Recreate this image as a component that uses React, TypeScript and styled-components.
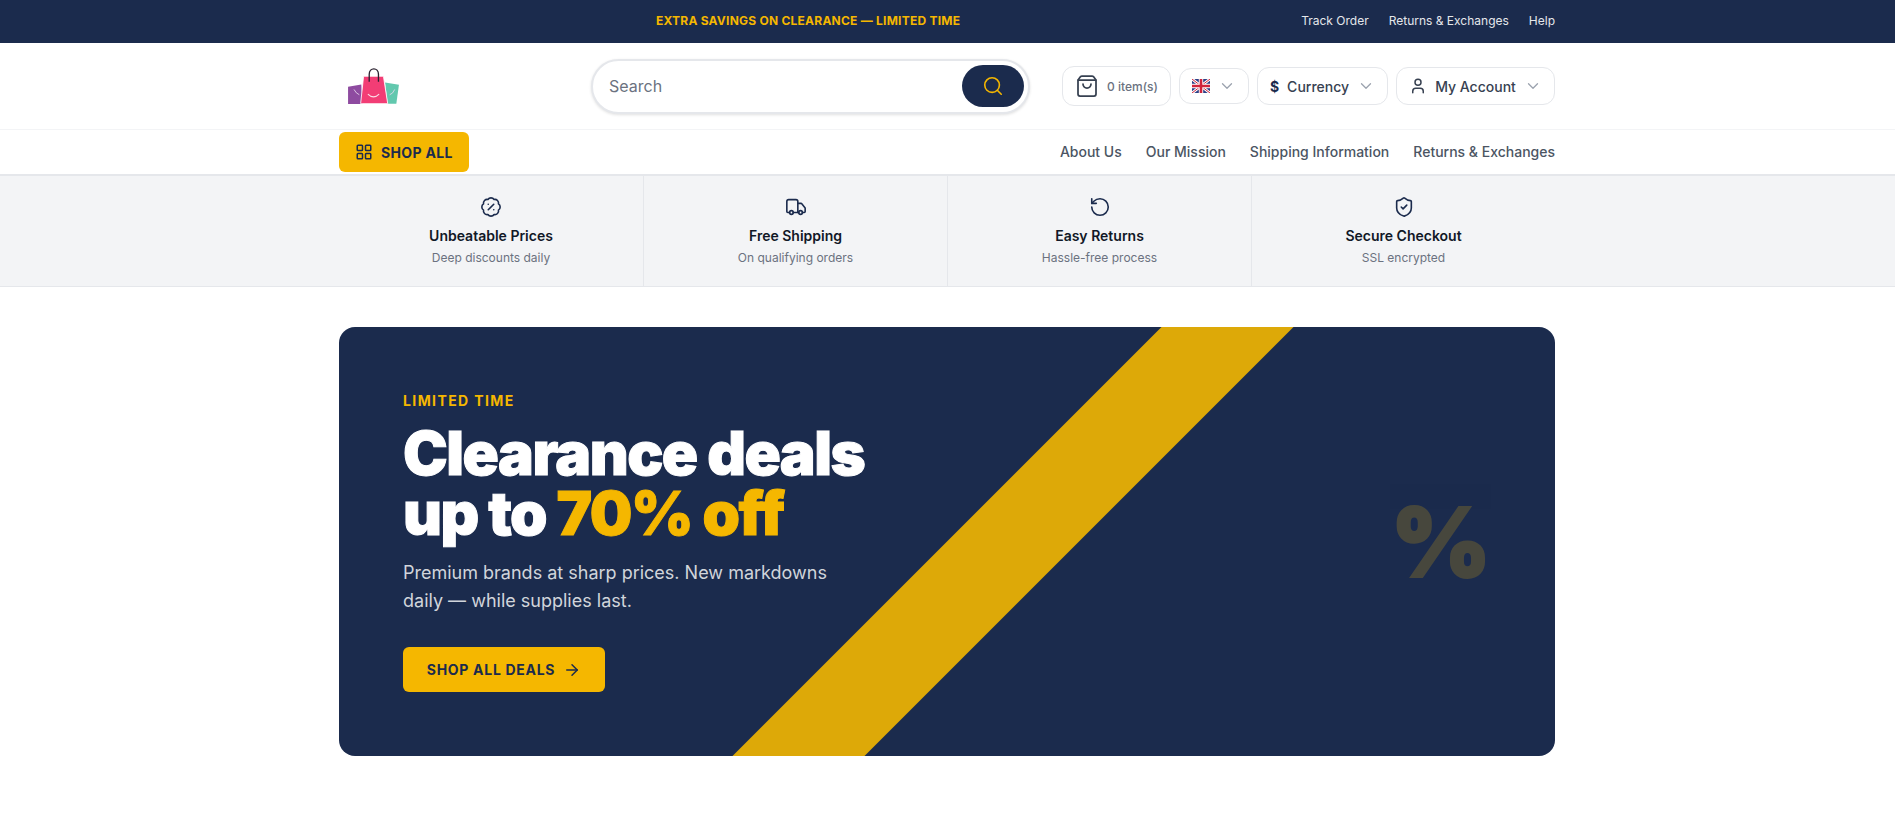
import styled, { createGlobalStyle } from "styled-components";
import {
  ArrowRight,
  BadgePercent,
  ChevronDown,
  LayoutGrid,
  RotateCcw,
  Search,
  ShieldCheck,
  ShoppingBag,
  Truck,
  User,
} from "lucide-react";

const navy = "#1b2b4d";
const yellow = "#f5b700";
const line = "#e5e7eb";

const GlobalStyle = createGlobalStyle`
  * {
    box-sizing: border-box;
  }
  html, body {
    margin: 0;
    background: #fff;
    font-family: Inter, "Liberation Sans", sans-serif;
    color: #111827;
  }
`;

const Container = styled.div`
  width: 1216px;
  margin-left: 339px;
`;

const TopBar = styled.div`
  height: 43px;
  background: ${navy};
`;

const TopBarInner = styled(Container)`
  height: 100%;
  display: flex;
  align-items: center;
  gap: 24px;
  padding-bottom: 1px;
`;

const Promo = styled.p`
  flex: 1;
  margin: 0;
  text-align: center;
  color: ${yellow};
  font-size: 12px;
  font-weight: 700;
  line-height: 16px;
  letter-spacing: 0.02em;
`;

const TopLinks = styled.nav`
  display: flex;
  gap: 20px;
`;

const TopLink = styled.a`
  color: #e5e7eb;
  font-size: 12px;
  line-height: 16px;
`;

const Header = styled.header`
  height: 87px;
  border-bottom: 1px solid #f3f4f6;
`;

const HeaderInner = styled(Container)`
  height: 100%;
  display: grid;
  grid-template-columns: 220px 1fr auto;
  column-gap: 32px;
  align-items: center;
`;

const Logo = styled.a`
  display: flex;
  padding-left: 9px;
  svg {
    display: block;
  }
`;

const SearchBox = styled.div`
  height: 55px;
  display: flex;
  align-items: center;
  justify-content: space-between;
  padding: 0 4px 0 16px;
  border: 2px solid ${line};
  border-radius: 9999px;
  background: #fff;
  box-shadow: 0 1px 3px rgba(0, 0, 0, 0.12);
`;

const SearchPlaceholder = styled.span`
  color: #6b7280;
  font-size: 16px;
`;

const SearchButton = styled.button`
  width: 62px;
  height: 42px;
  display: flex;
  align-items: center;
  justify-content: center;
  padding: 0;
  border: 0;
  border-radius: 9999px;
  background: ${navy};
  color: ${yellow};
`;

const Controls = styled.div`
  display: flex;
  align-items: center;
  gap: 8px;
`;

const Control = styled.div<{ $h: number; $w: number }>`
  width: ${(p) => p.$w}px;
  height: ${(p) => p.$h}px;
  display: flex;
  align-items: center;
  justify-content: center;
  gap: 8px;
  border: 1px solid ${line};
  border-radius: 12px;
  background: #fff;
  color: #374151;
  font-size: 14px;
  font-weight: 500;
`;

const CartCount = styled.span`
  color: #6b7280;
  font-size: 12px;
`;

const Dollar = styled.span`
  color: ${navy};
  font-weight: 700;
`;

const Caret = styled(ChevronDown)`
  color: #9ca3af;
`;

const Nav = styled.div`
  height: 46px;
  border-bottom: 2px solid ${line};
`;

const NavInner = styled(Container)`
  height: 100%;
  display: flex;
  align-items: center;
  justify-content: space-between;
`;

const ShopAll = styled.button`
  width: 130px;
  height: 40px;
  display: flex;
  align-items: center;
  gap: 8px;
  padding: 0 0 0 16px;
  border: 0;
  border-radius: 6px;
  background: ${yellow};
  color: ${navy};
  font-family: inherit;
  font-size: 14px;
  font-weight: 700;
  letter-spacing: 0.025em;
`;

const NavLinks = styled.nav`
  display: flex;
  gap: 24px;
  margin-bottom: 1px;
`;

const NavLink = styled.a`
  color: #4b5563;
  font-size: 14px;
  font-weight: 500;
`;

const Strip = styled.section`
  height: 111px;
  background: #f3f4f6;
  border-bottom: 1px solid ${line};
`;

const StripInner = styled(Container)`
  height: 100%;
  display: grid;
  grid-template-columns: repeat(4, 1fr);
`;

const Feature = styled.div`
  display: flex;
  flex-direction: column;
  align-items: center;
  padding-top: 20px;
  color: ${navy};
  & + & {
    border-left: 1px solid ${line};
  }
`;

const FeatureTitle = styled.h3`
  margin: 8px 0 0;
  color: #111827;
  font-size: 14px;
  font-weight: 600;
  line-height: 20px;
`;

const FeatureText = styled.p`
  margin: 4px 0 0;
  color: #6b7280;
  font-size: 12px;
  line-height: 16px;
`;

const Main = styled(Container)`
  padding: 40px 0 62px;
`;

const Hero = styled.section`
  position: relative;
  height: 429px;
  padding: 64px;
  overflow: hidden;
  border-radius: 16px;
  background: ${navy};
`;

const Band = styled.div`
  position: absolute;
  top: 0;
  bottom: 0;
  left: 608px;
  width: 132px;
  background: #dda908;
  transform: skewX(-45deg);
`;

const Glyph = styled.span`
  position: absolute;
  top: 167px;
  right: 64px;
  color: ${yellow};
  opacity: 0.2;
  font-size: 96px;
  font-weight: 900;
  line-height: 1;
  -webkit-text-stroke: 2px ${yellow};
`;

const HeroContent = styled.div`
  position: relative;
  max-width: 512px;
`;

const Eyebrow = styled.p`
  margin: 0;
  color: ${yellow};
  font-size: 14px;
  font-weight: 700;
  line-height: 20px;
  letter-spacing: 0.1em;
`;

const Headline = styled.h1`
  margin: 12px 0 0;
  color: #fff;
  font-size: 60px;
  font-weight: 900;
  line-height: 60px;
  letter-spacing: -0.025em;
  -webkit-text-stroke: 1px currentColor;
`;

const Accent = styled.span`
  color: ${yellow};
`;

const Lead = styled.p`
  margin: 16px 0 0;
  max-width: 448px;
  color: #d1d5db;
  font-size: 18px;
  line-height: 28px;
`;

const Cta = styled.button`
  width: 202px;
  height: 45px;
  margin-top: 32px;
  display: flex;
  align-items: center;
  justify-content: center;
  gap: 8px;
  padding: 0;
  border: 0;
  border-radius: 6px;
  background: ${yellow};
  color: ${navy};
  font-family: inherit;
  font-size: 14px;
  font-weight: 700;
  letter-spacing: 0.05em;
`;

function BagsLogo() {
  return (
    <svg width="53" height="38" viewBox="40 50 160 115" aria-label="logo">
      <path d="M40 110 80 103 84 162H40Z" fill="#8e4ba0" />
      <path d="M152 97 194 104 186 161H160Z" fill="#62c8ae" />
      <path d="M58 118q6 12 16 16M166 134q10-3 15-16" fill="none" stroke="#e9d9ee" strokeWidth="2.5" />
      <path d="M87 78h60l13 83H78Z" fill="#f23d75" stroke="#fff" strokeWidth="2.5" />
      <path
        d="M104 95V72c0-22 28-22 28 0v23"
        fill="none"
        stroke="#2b2230"
        strokeWidth="4"
      />
      <path d="M100 132q17 17 34 0" fill="none" stroke="#fbdde7" strokeWidth="3.5" />
    </svg>
  );
}

function UkFlag() {
  return (
    <svg width="18" height="14" viewBox="0 0 18 14" aria-label="English">
      <rect width="18" height="14" fill="#2b3f86" />
      <path d="M0 0 18 14M18 0 0 14" stroke="#fff" strokeWidth="2.8" />
      <path d="M0 0 18 14M18 0 0 14" stroke="#d0243c" strokeWidth="1" />
      <path d="M9 0v14M0 7h18" stroke="#fff" strokeWidth="4.4" />
      <path d="M9 0v14M0 7h18" stroke="#d0243c" strokeWidth="2.6" />
    </svg>
  );
}

const features = [
  { icon: BadgePercent, title: "Unbeatable Prices", text: "Deep discounts daily" },
  { icon: Truck, title: "Free Shipping", text: "On qualifying orders" },
  { icon: RotateCcw, title: "Easy Returns", text: "Hassle-free process" },
  { icon: ShieldCheck, title: "Secure Checkout", text: "SSL encrypted" },
];

export default function App() {
  return (
    <>
      <GlobalStyle />
      <TopBar>
        <TopBarInner>
          <Promo>EXTRA SAVINGS ON CLEARANCE — LIMITED TIME</Promo>
          <TopLinks>
            <TopLink>Track Order</TopLink>
            <TopLink>Returns &amp; Exchanges</TopLink>
            <TopLink>Help</TopLink>
          </TopLinks>
        </TopBarInner>
      </TopBar>

      <Header>
        <HeaderInner>
          <Logo>
            <BagsLogo />
          </Logo>
          <SearchBox>
            <SearchPlaceholder>Search</SearchPlaceholder>
            <SearchButton aria-label="Search">
              <Search size={22} strokeWidth={1.75} />
            </SearchButton>
          </SearchBox>
          <Controls>
            <Control $w={109} $h={40}>
              <ShoppingBag size={24} strokeWidth={1.75} />
              <CartCount>0 item(s)</CartCount>
            </Control>
            <Control $w={70} $h={36}>
              <UkFlag />
              <Caret size={18} strokeWidth={1.75} />
            </Control>
            <Control $w={131} $h={38}>
              <Dollar>$</Dollar>
              Currency
              <Caret size={18} strokeWidth={1.75} />
            </Control>
            <Control $w={159} $h={38}>
              <User size={18} strokeWidth={2} />
              My Account
              <Caret size={18} strokeWidth={1.75} />
            </Control>
          </Controls>
        </HeaderInner>
      </Header>

      <Nav>
        <NavInner>
          <ShopAll>
            <LayoutGrid size={18} strokeWidth={2} />
            SHOP ALL
          </ShopAll>
          <NavLinks>
            <NavLink>About Us</NavLink>
            <NavLink>Our Mission</NavLink>
            <NavLink>Shipping Information</NavLink>
            <NavLink>Returns &amp; Exchanges</NavLink>
          </NavLinks>
        </NavInner>
      </Nav>

      <Strip>
        <StripInner>
          {features.map(({ icon: Icon, title, text }) => (
            <Feature key={title}>
              <Icon size={22} strokeWidth={1.75} />
              <FeatureTitle>{title}</FeatureTitle>
              <FeatureText>{text}</FeatureText>
            </Feature>
          ))}
        </StripInner>
      </Strip>

      <Main>
        <Hero>
          <Band />
          <Glyph>%</Glyph>
          <HeroContent>
            <Eyebrow>LIMITED TIME</Eyebrow>
            <Headline>
              Clearance deals
              <br />
              up to <Accent>70% off</Accent>
            </Headline>
            <Lead>Premium brands at sharp prices. New markdowns daily — while supplies last.</Lead>
            <Cta>
              SHOP ALL DEALS
              <ArrowRight size={18} strokeWidth={2} />
            </Cta>
          </HeroContent>
        </Hero>
      </Main>
    </>
  );
}
